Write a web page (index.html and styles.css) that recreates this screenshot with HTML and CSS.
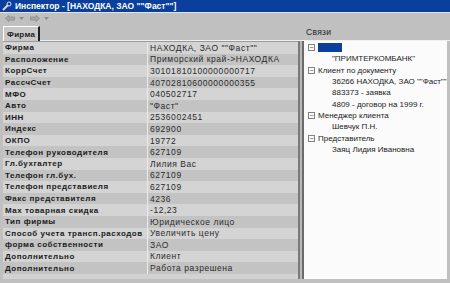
FILE: index.html
```html
<!DOCTYPE html>
<html>
<head>
<meta charset="utf-8">
<link rel="stylesheet" href="styles.css">
</head>
<body>
<div class="win">
  <div class="titlebar">
    <svg class="ticon" width="10" height="10" viewBox="0 0 10 10"><path d="M1 9 L6 4" stroke="#d8d8d8" stroke-width="2"/><circle cx="7" cy="3" r="2" fill="none" stroke="#e0e0e0" stroke-width="1"/></svg>
    <span>Инспектор - [НАХОДКА, ЗАО ""Фаст""]</span>
  </div>
  <div class="toolbar">
    <svg width="10" height="7" viewBox="0 0 10 7"><path d="M0.5 3.5 L4 0.5 L4 2 L9.5 2 L9.5 5 L4 5 L4 6.5 Z" fill="#a8a8a8" stroke="#8a8a8a" stroke-width="0.8"/></svg>
    <svg class="dd" width="5" height="3" viewBox="0 0 5 3"><path d="M0 0 L5 0 L2.5 3 Z" fill="#8a8a8a"/></svg>
    <svg width="10" height="7" viewBox="0 0 10 7"><path d="M9.5 3.5 L6 0.5 L6 2 L0.5 2 L0.5 5 L6 5 L6 6.5 Z" fill="#a8a8a8" stroke="#8a8a8a" stroke-width="0.8"/></svg>
    <svg class="dd" width="5" height="3" viewBox="0 0 5 3"><path d="M0 0 L5 0 L2.5 3 Z" fill="#8a8a8a"/></svg>
  </div>
  <div class="tabs">
    <div class="tab">Фирма</div>
    <div class="tabfill"></div>
    <div class="svlabel">Связи</div>
  </div>
  <div class="body">
    <div class="grid">
      <div class="row l"><span class="k">Фирма</span><span class="v">НАХОДКА, ЗАО ""Фаст""</span></div>
      <div class="row d"><span class="k">Расположение</span><span class="v">Приморский край-&gt;НАХОДКА</span></div>
      <div class="row l"><span class="k">КоррСчет</span><span class="v">30101810100000000717</span></div>
      <div class="row d"><span class="k">РассчСчет</span><span class="v">40702810600000000355</span></div>
      <div class="row l"><span class="k">МФО</span><span class="v">040502717</span></div>
      <div class="row d"><span class="k">Авто</span><span class="v">"Фаст"</span></div>
      <div class="row l"><span class="k">ИНН</span><span class="v">2536002451</span></div>
      <div class="row d"><span class="k">Индекс</span><span class="v">692900</span></div>
      <div class="row l"><span class="k">ОКПО</span><span class="v">19772</span></div>
      <div class="row d"><span class="k">Телефон руководителя</span><span class="v">627109</span></div>
      <div class="row l"><span class="k">Гл.бухгалтер</span><span class="v">Лилия Вас</span></div>
      <div class="row d"><span class="k">Телефон гл.бух.</span><span class="v">627109</span></div>
      <div class="row l"><span class="k">Телефон представиеля</span><span class="v">627109</span></div>
      <div class="row d"><span class="k">Факс представителя</span><span class="v">4236</span></div>
      <div class="row l"><span class="k">Мах товарная скидка</span><span class="v">-12,23</span></div>
      <div class="row d"><span class="k">Тип фирмы</span><span class="v">Юридическое лицо</span></div>
      <div class="row l"><span class="k">Способ учета трансп.расходов</span><span class="v">Увеличить цену</span></div>
      <div class="row d"><span class="k">форма собственности</span><span class="v">ЗАО</span></div>
      <div class="row l"><span class="k">Дополнительно</span><span class="v">Клиент</span></div>
      <div class="row d"><span class="k">Дополнительно</span><span class="v">Работа разрешена</span></div>
    </div>
    <div class="splitter"></div>
    <div class="tree">
      <div class="node"><span class="box">&#8722;</span><span class="sel">Банк</span></div>
      <div class="leaf">"ПРИМТЕРКОМБАНК"</div>
      <div class="node"><span class="box">&#8722;</span>Клиент по документу</div>
      <div class="leaf">36266 НАХОДКА, ЗАО ""Фаст""</div>
      <div class="leaf">883373 - заявка</div>
      <div class="leaf">4809 - договор на 1999 г.</div>
      <div class="node"><span class="box">&#8722;</span>Менеджер клиента</div>
      <div class="leaf">Шевчук П.Н.</div>
      <div class="node"><span class="box">&#8722;</span>Представитель</div>
      <div class="leaf">Заяц Лидия Ивановна</div>
    </div>
  </div>
</div>
</body>
</html>
```

FILE: styles.css
```css
html, body {
  margin: 0;
  padding: 0;
  width: 450px;
  height: 283px;
  overflow: hidden;
  background: #c0c0c0;
  font-family: "Liberation Sans", Arial, sans-serif;
}
.win {
  width: 450px;
  height: 283px;
  display: flex;
  flex-direction: column;
  background: #c0c0c0;
}
.titlebar {
  height: 12px;
  background: #0a3f9e;
  color: #fff;
  font-size: 8.5px;
  font-weight: bold;
  display: flex;
  align-items: center;
  gap: 3px;
  padding-left: 2px;
}
.toolbar {
  height: 10px;
  display: flex;
  align-items: center;
  padding-left: 5px;
  gap: 4px;
  border-top: 1px solid #e4e4e4;
}
.toolbar .dd { margin-right: 2px; }
.tabs {
  height: 18px;
  display: flex;
  align-items: flex-end;
  position: relative;
}
.tab {
  margin-left: 3px;
  width: 37px;
  height: 15px;
  background: #c8c8c8;
  border-top: 1px solid #fff;
  border-left: 1px solid #fff;
  border-right: 2px solid #202020;
  font-size: 8px;
  font-weight: bold;
  color: #222;
  display: flex;
  align-items: center;
  padding-left: 3px;
  box-sizing: border-box;
  letter-spacing: 0.3px;
}
.tabfill { flex: 1; border-bottom: 1px solid #f0f0f0; }
.svlabel {
  position: absolute;
  left: 306px;
  top: 4px;
  font-size: 8.5px;
  color: #222;
  letter-spacing: 0.3px;
}
.body {
  flex: 1;
  display: flex;
  padding: 0 3px 4px 3px;
}
.grid {
  width: 295px;
  display: flex;
  flex-direction: column;
  border-top: 1px solid #9a9a9a;
  background: #d2d2d2;
}
.row {
  height: 11.6px;
  display: flex;
  align-items: center;
  font-size: 8px;
  color: #1a1a1a;
  white-space: nowrap;
}
.row.l { background: #d4d4d4; }
.row.d { background: #c3c3c3; }
.k {
  width: 145px;
  flex: none;
  font-weight: bold;
  padding-left: 2px;
  box-sizing: border-box;
  border-right: 1px solid #eaeaea;
  height: 100%;
  display: flex;
  align-items: center;
  overflow: hidden;
  letter-spacing: 0.52px;
}
.v {
  padding-left: 2px;
  color: #2a2a2a;
  font-size: 8.5px;
  letter-spacing: 0.55px;
  overflow: hidden;
}
.splitter {
  width: 6px;
  flex: none;
  background: #b8b8b8;
  border-left: 2px solid #7a7a7a;
  border-right: 2px solid #6a6a6a;
  box-sizing: border-box;
}
.tree {
  flex: 1;
  background: #fbfbfb;
  font-size: 8px;
  color: #222;
  padding-top: 1px;
  white-space: nowrap;
  overflow: hidden;
}
.node {
  height: 11.3px;
  display: flex;
  align-items: center;
  padding-left: 4px;
  gap: 3px;
}
.box {
  width: 7px;
  height: 7px;
  border: 1px solid #808080;
  box-sizing: border-box;
  font-size: 7px;
  line-height: 5px;
  text-align: center;
  color: #444;
  display: inline-block;
}
.sel {
  background: #0a3f9e;
  color: #0a3f9e;
  padding: 0 2px;
  width: 20px;
}
.leaf {
  height: 11.3px;
  display: flex;
  align-items: center;
  padding-left: 28px;
}
```
